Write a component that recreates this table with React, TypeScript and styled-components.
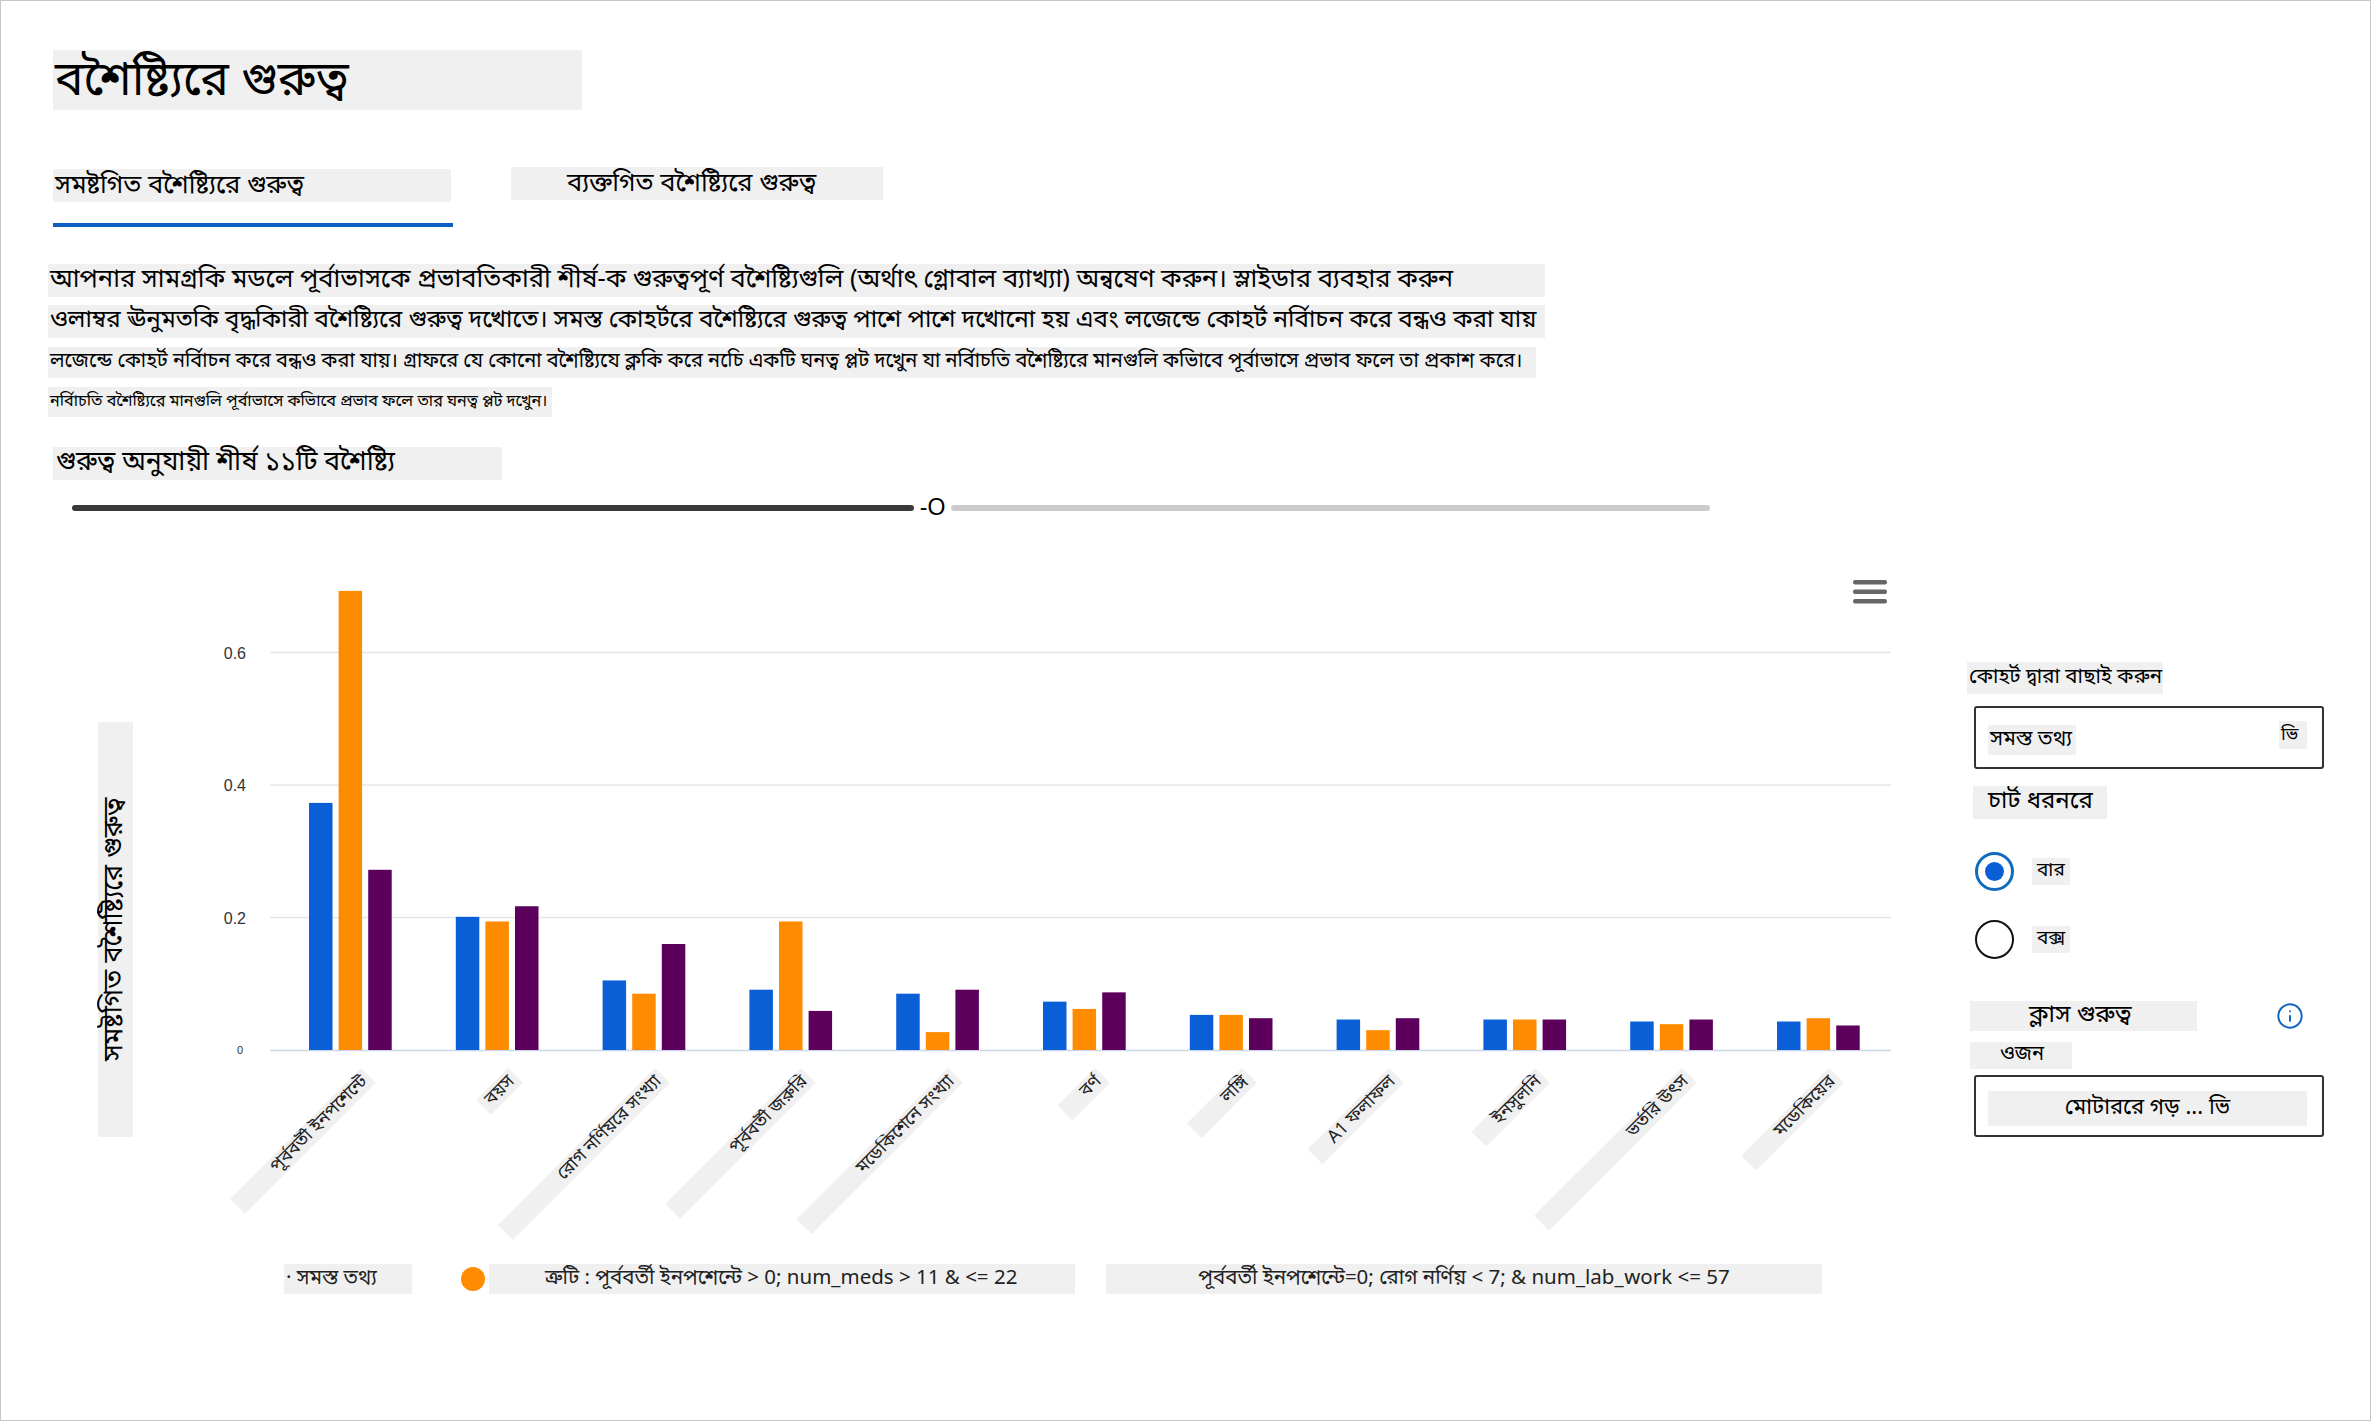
import React from 'react';
import styled, { createGlobalStyle } from 'styled-components';
import { Info } from 'lucide-react';

const FONT = `"Noto Sans Bengali", "Nirmala UI", "Vrinda", "Noto Sans", "DejaVu Sans", sans-serif`;

const Global = createGlobalStyle`
  html, body { margin: 0; padding: 0; background: #fff; }
  body { font-family: ${FONT}; color: #000; }
  * { box-sizing: border-box; }
`;

const Page = styled.div`
  width: 2371px;
  height: 1421px;
  border: 1px solid #c6c6c6;
  background: #fff;
  overflow: hidden;
`;

const Top = styled.div`
  padding-left: 52px;
  display: flex;
  flex-direction: column;
  align-items: flex-start;
`;

const Heading = styled.h1`
  margin: 49px 0 0 0;
  width: 529px;
  height: 60px;
  background: #f0f0f0;
  font-size: 48px;
  font-weight: 400;
  line-height: 54px;
  padding: 6px 0 0 2px;
  white-space: nowrap;
`;

const Tabs = styled.div`
  display: flex;
  align-items: flex-start;
  margin-top: 59px;
  gap: 58px;
`;

const Tab = styled.div`
  display: flex;
  flex-direction: column;
`;

const TabLabel = styled.div<{ $w: number; $pad: number; $mt: number }>`
  width: ${p => p.$w}px;
  height: 33px;
  margin-top: ${p => p.$mt}px;
  background: #f0f0f0;
  font-size: 25.5px;
  line-height: 31px;
  padding-top: 2px;
  padding-left: ${p => p.$pad}px;
  white-space: nowrap;
`;

const TabUnderline = styled.div`
  width: 400px;
  height: 4px;
  margin-top: 21px;
  background: #0f5fc4;
`;

const Desc = styled.div`
  margin: 37px 0 0 -5px;
  display: flex;
  flex-direction: column;
  align-items: flex-start;
`;

const DescLine = styled.div<{ $w: number; $h: number; $fs: number; $mt: number }>`
  width: ${p => p.$w}px;
  height: ${p => p.$h}px;
  line-height: ${p => p.$h}px;
  font-size: ${p => p.$fs}px;
  margin-top: ${p => p.$mt}px;
  background: #f0f0f0;
  padding-left: 2px;
  white-space: nowrap;
`;

const SliderLabel = styled.div`
  margin-top: 30px;
  width: 449px;
  height: 33px;
  line-height: 33px;
  font-size: 26.5px;
  background: #f0f0f0;
  padding-left: 3px;
  white-space: nowrap;
`;

const Slider = styled.div`
  margin: 12px 0 0 19px;
  width: 1638px;
  height: 31px;
  display: flex;
  align-items: center;
`;

const TrackFill = styled.div`
  width: 842px;
  height: 6px;
  border-radius: 3px;
  background: #3a3a3a;
`;

const Thumb = styled.div`
  width: 37px;
  height: 31px;
  background: #fff;
  font-size: 23px;
  line-height: 31px;
  text-align: center;
  font-family: "Liberation Sans", Arial, sans-serif;
`;

const TrackRest = styled.div`
  flex: 1;
  height: 6px;
  border-radius: 3px;
  background: #cbcbcb;
`;

const ChartRow = styled.div`
  margin-top: 38px;
  display: flex;
  align-items: flex-start;
`;

const ChartColumn = styled.div`
  width: 1940px;
  display: flex;
  flex-direction: column;
`;

const Plot = styled.div`
  position: relative;
  width: 1940px;
  height: 703px;
`;

const PlotSvg = styled.svg`
  position: absolute;
  left: 0;
  top: 0;
`;

const AxisTitle = styled.div`
  position: absolute;
  left: 97px;
  top: 161px;
  width: 35px;
  height: 415px;
  background: #f0f0f0;
  writing-mode: vertical-rl;
  transform: rotate(180deg);
  font-size: 27px;
  line-height: 35px;
  text-align: center;
  white-space: nowrap;
`;

const XLabel = styled.div<{ $len: number }>`
  position: absolute;
  width: ${p => p.$len}px;
  height: 21px;
  background: #f0f0f0;
  font-size: 18px;
  line-height: 21px;
  text-align: right;
  padding-right: 5px;
  white-space: nowrap;
  overflow: hidden;
  color: #222;
  transform-origin: right top;
  transform: rotate(-45deg);
`;

const Legend = styled.div`
  height: 30px;
  display: flex;
  align-items: center;
`;

const LegendBox = styled.div<{ $w: number; $ml: number; $pad: number; $center?: boolean }>`
  margin-left: ${p => p.$ml}px;
  width: ${p => p.$w}px;
  height: 30px;
  line-height: 30px;
  background: #f0f0f0;
  font-size: 20.5px;
  padding-left: ${p => p.$pad}px;
  text-align: ${p => (p.$center ? 'center' : 'left')};
  white-space: nowrap;
  color: #222;
`;

const LegendDot = styled.div`
  margin-left: 49px;
  width: 24px;
  height: 24px;
  border-radius: 50%;
  background: #ff8c00;
`;

const Right = styled.div`
  margin-left: 26px;
  width: 360px;
  padding-top: 101px;
  display: flex;
  flex-direction: column;
  align-items: flex-start;
`;

const PanelLabel = styled.div<{ $w: number; $h: number; $fs: number; $pad: number; $mt: number; $ml: number }>`
  width: ${p => p.$w}px;
  height: ${p => p.$h}px;
  line-height: ${p => p.$h}px;
  font-size: ${p => p.$fs}px;
  padding-left: ${p => p.$pad}px;
  margin-top: ${p => p.$mt}px;
  margin-left: ${p => p.$ml}px;
  background: #f0f0f0;
  white-space: nowrap;
`;

const Dropdown = styled.div<{ $mt: number; $h: number }>`
  margin: ${p => p.$mt}px 0 0 7px;
  width: 350px;
  height: ${p => p.$h}px;
  border: 2px solid #333;
  border-radius: 3px;
  display: flex;
  align-items: center;
  justify-content: space-between;
  padding: 0 15px 0 12px;
`;

const DropText = styled.div`
  height: 30px;
  line-height: 30px;
  font-size: 21px;
  background: #f0f0f0;
  padding: 0 4px 0 2px;
  margin-top: 4px;
  white-space: nowrap;
`;

const Chevron = styled.div`
  width: 28px;
  height: 28px;
  line-height: 28px;
  font-size: 18px;
  background: #f0f0f0;
  padding-left: 2px;
  margin-top: -6px;
`;

const DropWide = styled.div`
  width: 324px;
  height: 35px;
  line-height: 35px;
  font-size: 22px;
  background: #f0f0f0;
  text-align: center;
  white-space: nowrap;
  margin-top: 4px;
`;

const RadioRow = styled.div<{ $mt: number }>`
  margin: ${p => p.$mt}px 0 0 8px;
  display: flex;
  align-items: center;
  gap: 18px;
`;

const RadioCircle = styled.div<{ $on: boolean }>`
  width: 39px;
  height: 39px;
  border-radius: 50%;
  border: ${p => (p.$on ? '3px solid #0f6cbd' : '2.5px solid #111')};
  display: flex;
  align-items: center;
  justify-content: center;
  &::after {
    content: '';
    display: ${p => (p.$on ? 'block' : 'none')};
    width: 19px;
    height: 19px;
    border-radius: 50%;
    background: #0b5fd6;
  }
`;

const RadioText = styled.div`
  height: 27px;
  line-height: 27px;
  font-size: 19px;
  background: #f0f0f0;
  padding: 0 5px;
`;

const ClassRow = styled.div`
  margin: 42px 0 0 3px;
  display: flex;
  align-items: center;
  gap: 79px;
`;

const InfoWrap = styled.div`
  width: 28px;
  height: 28px;
  display: flex;
  color: #1565c0;
`;

const bars: number[][] = [
  [0.373, 0.693, 0.272],
  [0.201, 0.194, 0.217],
  [0.105, 0.085, 0.16],
  [0.091, 0.194, 0.059],
  [0.085, 0.027, 0.091],
  [0.073, 0.062, 0.087],
  [0.053, 0.053, 0.048],
  [0.046, 0.03, 0.048],
  [0.046, 0.046, 0.046],
  [0.043, 0.039, 0.046],
  [0.043, 0.048, 0.037],
];

const labels: { t: string; len: number }[] = [
  { t: 'পূর্ববর্তী ইনপশেন্টে', len: 185 },
  { t: 'বয়স', len: 45 },
  { t: 'রোগ নর্ণিয়রে সংখ্যা', len: 222 },
  { t: 'পূর্ববর্তী জরুরি', len: 192 },
  { t: 'মডেকিশেনে সংখ্যা', len: 214 },
  { t: 'বর্ণ', len: 53 },
  { t: 'লঙ্গি', len: 78 },
  { t: 'A1 ফলাফল', len: 115 },
  { t: 'ইনসুলনি', len: 90 },
  { t: 'ভর্তরি উৎস', len: 209 },
  { t: 'মডেকিয়ের', len: 124 },
];

const COLORS = ['#0b5fd6', '#ff8c00', '#5c005c'];
const BASE = 489;
const SCALE = 662.5;
const GX = 308;
const GSTEP = 146.8;

function Chart() {
  return (
    <Plot>
      <PlotSvg width={1940} height={703} viewBox="0 0 1940 703">
        {[1, 2, 3].map(k => (
          <line key={k} x1={269} x2={1890} y1={BASE - k * 132.5} y2={BASE - k * 132.5} stroke="#e6e6e6" strokeWidth={1.5} />
        ))}
        <line x1={269} x2={1890} y1={BASE + 0.5} y2={BASE + 0.5} stroke="#ccd6eb" strokeWidth={1.5} />
        {['0.2', '0.4', '0.6'].map((s, k) => (
          <text key={s} x={245} y={BASE - (k + 1) * 132.5 + 6} textAnchor="end" fontSize={16} fill="#333" fontFamily="Liberation Sans, Arial, sans-serif">
            {s}
          </text>
        ))}
        <text x={242} y={BASE + 4} textAnchor="end" fontSize={11} fill="#333" fontFamily="Liberation Sans, Arial, sans-serif">
          0
        </text>
        {bars.map((g, i) =>
          g.map((v, j) => {
            const h = v * SCALE;
            return (
              <rect key={`${i}-${j}`} x={GX + i * GSTEP + j * 29.6} y={BASE - h} width={23.5} height={h} fill={COLORS[j]} />
            );
          })
        )}
        {[19, 28.5, 38].map(y => (
          <rect key={y} x={1852} y={y} width={34} height={4.5} rx={2} fill="#666" />
        ))}
      </PlotSvg>
      <AxisTitle>সমষ্টগিত বশৈষ্ট্যিরে গুরুত্ব</AxisTitle>
      {labels.map((l, i) => {
        const ax = GX + i * GSTEP + 41 + 11;
        return (
          <XLabel key={i} $len={l.len} style={{ left: ax - l.len, top: BASE + 18 }}>
            {l.t}
          </XLabel>
        );
      })}
    </Plot>
  );
}

export default function App() {
  return (
    <>
      <Global />
      <Page>
        <Top>
          <Heading>বশৈষ্ট্যিরে গুরুত্ব</Heading>
          <Tabs>
            <Tab>
              <TabLabel $w={398} $pad={2} $mt={0}>সমষ্টগিত বশৈষ্ট্যিরে গুরুত্ব</TabLabel>
              <TabUnderline />
            </Tab>
            <Tab>
              <TabLabel $w={372} $pad={56} $mt={-2}>ব্যক্তগিত বশৈষ্ট্যিরে গুরুত্ব</TabLabel>
            </Tab>
          </Tabs>
          <Desc>
            <DescLine $w={1497} $h={33} $fs={25.5} $mt={0}>
              আপনার সামগ্রকি মডলে পূর্বাভাসকে প্রভাবতিকারী শীর্ষ-ক গুরুত্বপূর্ণ বশৈষ্ট্যিগুলি (অর্থাৎ গ্লোবাল ব্যাখ্যা) অন্বষেণ করুন। স্লাইডার ব্যবহার করুন
            </DescLine>
            <DescLine $w={1497} $h={33} $fs={24.2} $mt={8}>
              ওলাম্বর ঊনুমতকি বৃদ্ধকিারী বশৈষ্ট্যিরে গুরুত্ব দখোতে। সমস্ত কোহর্টরে বশৈষ্ট্যিরে গুরুত্ব পাশে পাশে দখোনো হয় এবং লজেন্ডে কোহর্ট নর্বিাচন করে বন্ধও করা যায়
            </DescLine>
            <DescLine $w={1488} $h={31} $fs={20} $mt={9}>
              লজেন্ডে কোহর্ট নর্বিাচন করে বন্ধও করা যায়। গ্রাফরে যে কোনো বশৈষ্ট্যিযে ক্লকি করে নচিে একটি ঘনত্ব প্লট দখেুন যা নর্বিাচতি বশৈষ্ট্যিরে মানগুলি কভিাবে পূর্বাভাসে প্রভাব ফলে তা প্রকাশ করে।
            </DescLine>
            <DescLine $w={504} $h={30} $fs={16.2} $mt={9}>
              নর্বিাচতি বশৈষ্ট্যিরে মানগুলি পূর্বাভাসে কভিাবে প্রভাব ফলে তার ঘনত্ব প্লট দখেুন।
            </DescLine>
          </Desc>
          <SliderLabel>গুরুত্ব অনুযায়ী শীর্ষ ১১টি বশৈষ্ট্যি</SliderLabel>
          <Slider>
            <TrackFill />
            <Thumb>-O</Thumb>
            <TrackRest />
          </Slider>
        </Top>
        <ChartRow>
          <ChartColumn>
            <Chart />
            <Legend>
              <LegendBox $w={128} $ml={283} $pad={2}>· সমস্ত তথ্য</LegendBox>
              <LegendDot />
              <LegendBox $w={586} $ml={4} $pad={56}>
                ত্রুটি : পূর্ববর্তী ইনপশেন্টে &gt; 0; num_meds &gt; 11 &amp; &lt;= 22
              </LegendBox>
              <LegendBox $w={716} $ml={31} $pad={0} $center>
                পূর্ববর্তী ইনপশেন্টে=0; রোগ নর্ণিয় &lt; 7; &amp; num_lab_work &lt;= 57
              </LegendBox>
            </Legend>
          </ChartColumn>
          <Right>
            <PanelLabel $w={196} $h={32} $fs={20.5} $pad={2} $mt={0} $ml={0}>কোহর্ট দ্বারা বাছাই করুন</PanelLabel>
            <Dropdown $mt={12} $h={63}>
              <DropText>সমস্ত তথ্য</DropText>
              <Chevron>ভি</Chevron>
            </Dropdown>
            <PanelLabel $w={134} $h={33} $fs={24} $pad={15} $mt={17} $ml={6}>চার্ট ধরনরে</PanelLabel>
            <RadioRow $mt={33}>
              <RadioCircle $on />
              <RadioText>বার</RadioText>
            </RadioRow>
            <RadioRow $mt={29}>
              <RadioCircle $on={false} />
              <RadioText>বক্স</RadioText>
            </RadioRow>
            <ClassRow>
              <PanelLabel $w={227} $h={30} $fs={24.5} $pad={59} $mt={0} $ml={0}>ক্লাস গুরুত্ব</PanelLabel>
              <InfoWrap>
                <Info size={28} strokeWidth={1.7} />
              </InfoWrap>
            </ClassRow>
            <PanelLabel $w={102} $h={27} $fs={20} $pad={30} $mt={11} $ml={3}>ওজন</PanelLabel>
            <Dropdown $mt={6} $h={62}>
              <DropWide>মোটাররে গড় ... ভি</DropWide>
            </Dropdown>
          </Right>
        </ChartRow>
      </Page>
    </>
  );
}
